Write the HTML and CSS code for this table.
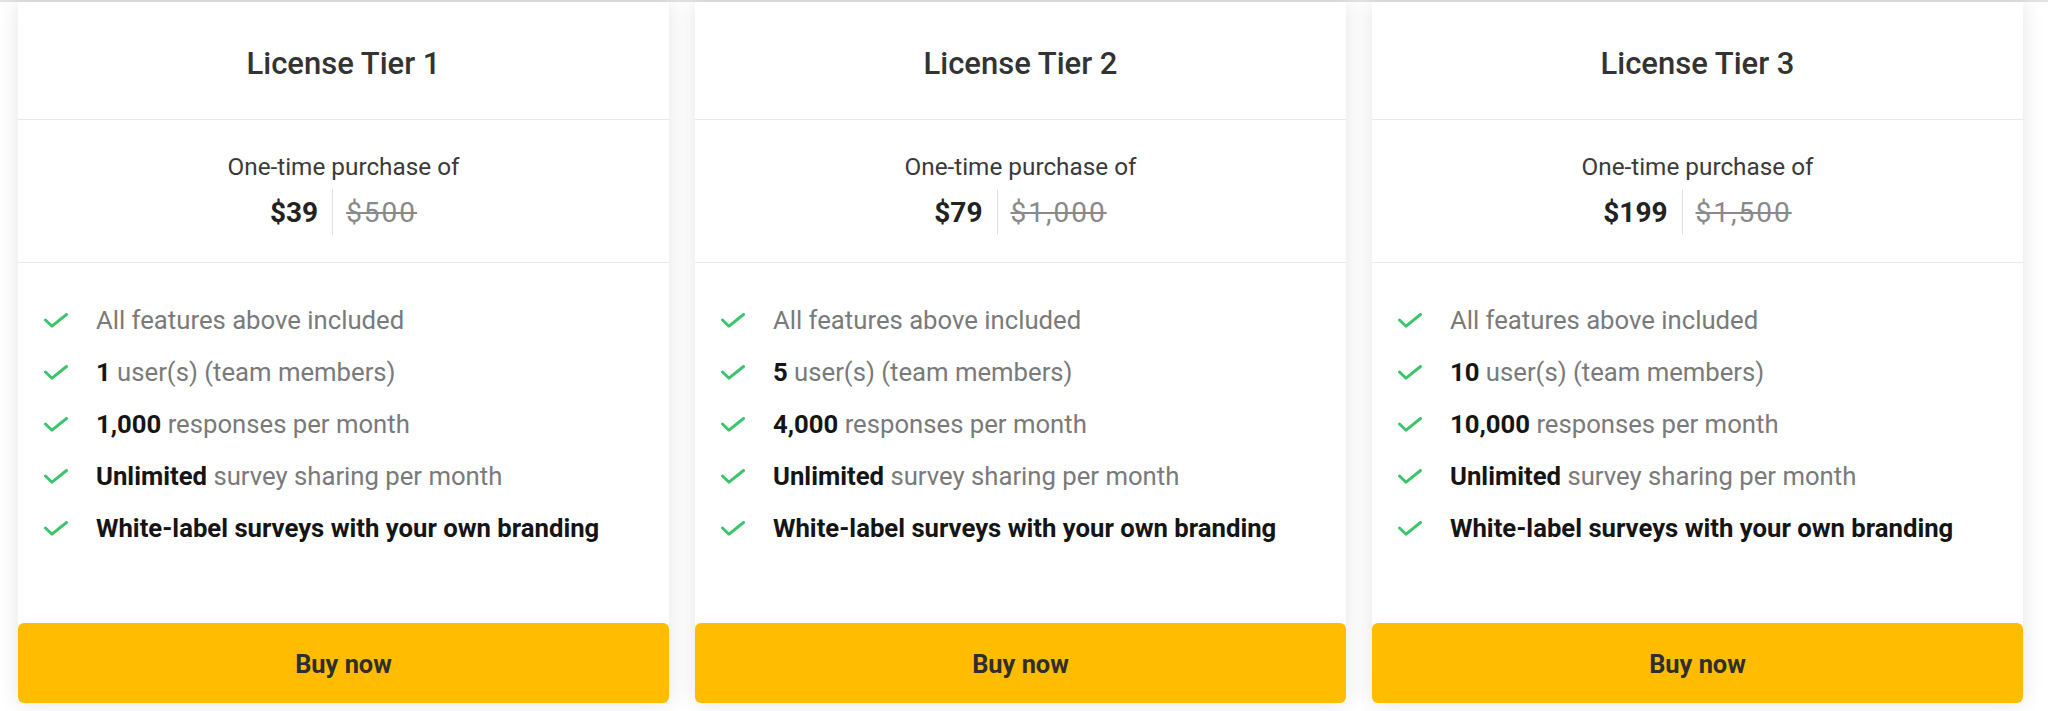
FILE: index.html
```html
<!DOCTYPE html>
<html lang="en">
<head>
<meta charset="utf-8">
<title>License Tiers</title>
<link rel="stylesheet" href="styles.css">
</head>
<body>
<div class="topline"></div>
<main class="tiers">
  <section class="card">
    <header class="card-head"><h2>License Tier 1</h2></header>
    <div class="card-price">
      <div class="price-label">One-time purchase of</div>
      <div class="price-row"><span class="price-now">$39</span><span class="price-sep"></span><span class="price-old">$500</span></div>
    </div>
    <ul class="features">
      <li><svg class="check" viewBox="0 0 24 15"><path d="M1.5 7 L8 13.2 L22.5 1.5"/></svg><span>All features above included</span></li>
      <li><svg class="check" viewBox="0 0 24 15"><path d="M1.5 7 L8 13.2 L22.5 1.5"/></svg><span><b>1</b> user(s) (team members)</span></li>
      <li><svg class="check" viewBox="0 0 24 15"><path d="M1.5 7 L8 13.2 L22.5 1.5"/></svg><span><b>1,000</b> responses per month</span></li>
      <li><svg class="check" viewBox="0 0 24 15"><path d="M1.5 7 L8 13.2 L22.5 1.5"/></svg><span><b>Unlimited</b> survey sharing per month</span></li>
      <li><svg class="check" viewBox="0 0 24 15"><path d="M1.5 7 L8 13.2 L22.5 1.5"/></svg><span><b>White-label surveys with your own branding</b></span></li>
    </ul>
    <button class="buy">Buy now</button>
  </section>
  <section class="card">
    <header class="card-head"><h2>License Tier 2</h2></header>
    <div class="card-price">
      <div class="price-label">One-time purchase of</div>
      <div class="price-row"><span class="price-now">$79</span><span class="price-sep"></span><span class="price-old">$1,000</span></div>
    </div>
    <ul class="features">
      <li><svg class="check" viewBox="0 0 24 15"><path d="M1.5 7 L8 13.2 L22.5 1.5"/></svg><span>All features above included</span></li>
      <li><svg class="check" viewBox="0 0 24 15"><path d="M1.5 7 L8 13.2 L22.5 1.5"/></svg><span><b>5</b> user(s) (team members)</span></li>
      <li><svg class="check" viewBox="0 0 24 15"><path d="M1.5 7 L8 13.2 L22.5 1.5"/></svg><span><b>4,000</b> responses per month</span></li>
      <li><svg class="check" viewBox="0 0 24 15"><path d="M1.5 7 L8 13.2 L22.5 1.5"/></svg><span><b>Unlimited</b> survey sharing per month</span></li>
      <li><svg class="check" viewBox="0 0 24 15"><path d="M1.5 7 L8 13.2 L22.5 1.5"/></svg><span><b>White-label surveys with your own branding</b></span></li>
    </ul>
    <button class="buy">Buy now</button>
  </section>
  <section class="card">
    <header class="card-head"><h2>License Tier 3</h2></header>
    <div class="card-price">
      <div class="price-label">One-time purchase of</div>
      <div class="price-row"><span class="price-now">$199</span><span class="price-sep"></span><span class="price-old">$1,500</span></div>
    </div>
    <ul class="features">
      <li><svg class="check" viewBox="0 0 24 15"><path d="M1.5 7 L8 13.2 L22.5 1.5"/></svg><span>All features above included</span></li>
      <li><svg class="check" viewBox="0 0 24 15"><path d="M1.5 7 L8 13.2 L22.5 1.5"/></svg><span><b>10</b> user(s) (team members)</span></li>
      <li><svg class="check" viewBox="0 0 24 15"><path d="M1.5 7 L8 13.2 L22.5 1.5"/></svg><span><b>10,000</b> responses per month</span></li>
      <li><svg class="check" viewBox="0 0 24 15"><path d="M1.5 7 L8 13.2 L22.5 1.5"/></svg><span><b>Unlimited</b> survey sharing per month</span></li>
      <li><svg class="check" viewBox="0 0 24 15"><path d="M1.5 7 L8 13.2 L22.5 1.5"/></svg><span><b>White-label surveys with your own branding</b></span></li>
    </ul>
    <button class="buy">Buy now</button>
  </section>
</main>
</body>
</html>
```

FILE: styles.css
```css
html, body {
  margin: 0;
  padding: 0;
  background: #ffffff;
  font-family: Roboto, "Noto Sans", Arial, sans-serif;
  overflow: hidden;
}

.topline {
  height: 2px;
  background: #e2e2e2;
}

.tiers {
  display: flex;
  gap: 26px;
  padding: 0 25px 8px 18px;
}

.card {
  width: 651px;
  height: 701px;
  flex: none;
  display: flex;
  flex-direction: column;
  background: #ffffff;
  box-shadow: 0 0 22px rgba(0, 0, 0, 0.11);
  border-radius: 0 0 6px 6px;
}

.card-head {
  height: 118px;
  box-sizing: border-box;
  padding-top: 5px;
  display: flex;
  align-items: center;
  justify-content: center;
  border-bottom: 1px solid #e9e9e9;
}

.card-head h2 {
  margin: 0;
  font-size: 31px;
  font-weight: 500;
  color: #333333;
}

.card-price {
  height: 143px;
  border-bottom: 1px solid #e9e9e9;
  display: flex;
  flex-direction: column;
  align-items: center;
  padding-top: 33px;
  box-sizing: border-box;
}

.price-label {
  font-size: 24.3px;
  line-height: 28px;
  color: #3a3a3a;
}

.price-row {
  margin-top: 8px;
  height: 46px;
  display: flex;
  align-items: center;
}

.price-now {
  font-size: 28px;
  font-weight: 700;
  color: #222222;
}

.price-sep {
  width: 1px;
  height: 46px;
  background: #e2e2e2;
  margin: 0 13px 0 14px;
}

.price-old {
  font-size: 28px;
  color: #8a8a8a;
  text-decoration: line-through;
  letter-spacing: 2px;
}

.features {
  list-style: none;
  margin: 0;
  padding: 31px 26px 0 26px;
  flex: 1;
}

.features li {
  height: 52px;
  display: flex;
  align-items: center;
  gap: 28px;
  font-size: 25.7px;
  color: #7a7a7a;
}

.features b {
  color: #151515;
  font-weight: 700;
}

.check {
  width: 24px;
  height: 15px;
  flex: none;
  fill: none;
  stroke: #3cc46c;
  stroke-width: 2.9;
  stroke-linecap: round;
  stroke-linejoin: round;
}

.buy {
  height: 80px;
  border: none;
  border-radius: 6px;
  background: #ffbc00;
  font-family: Roboto, "Noto Sans", Arial, sans-serif;
  font-size: 25.4px;
  font-weight: 700;
  color: #2e2e2e;
  cursor: pointer;
  padding-top: 3px;
}
```
